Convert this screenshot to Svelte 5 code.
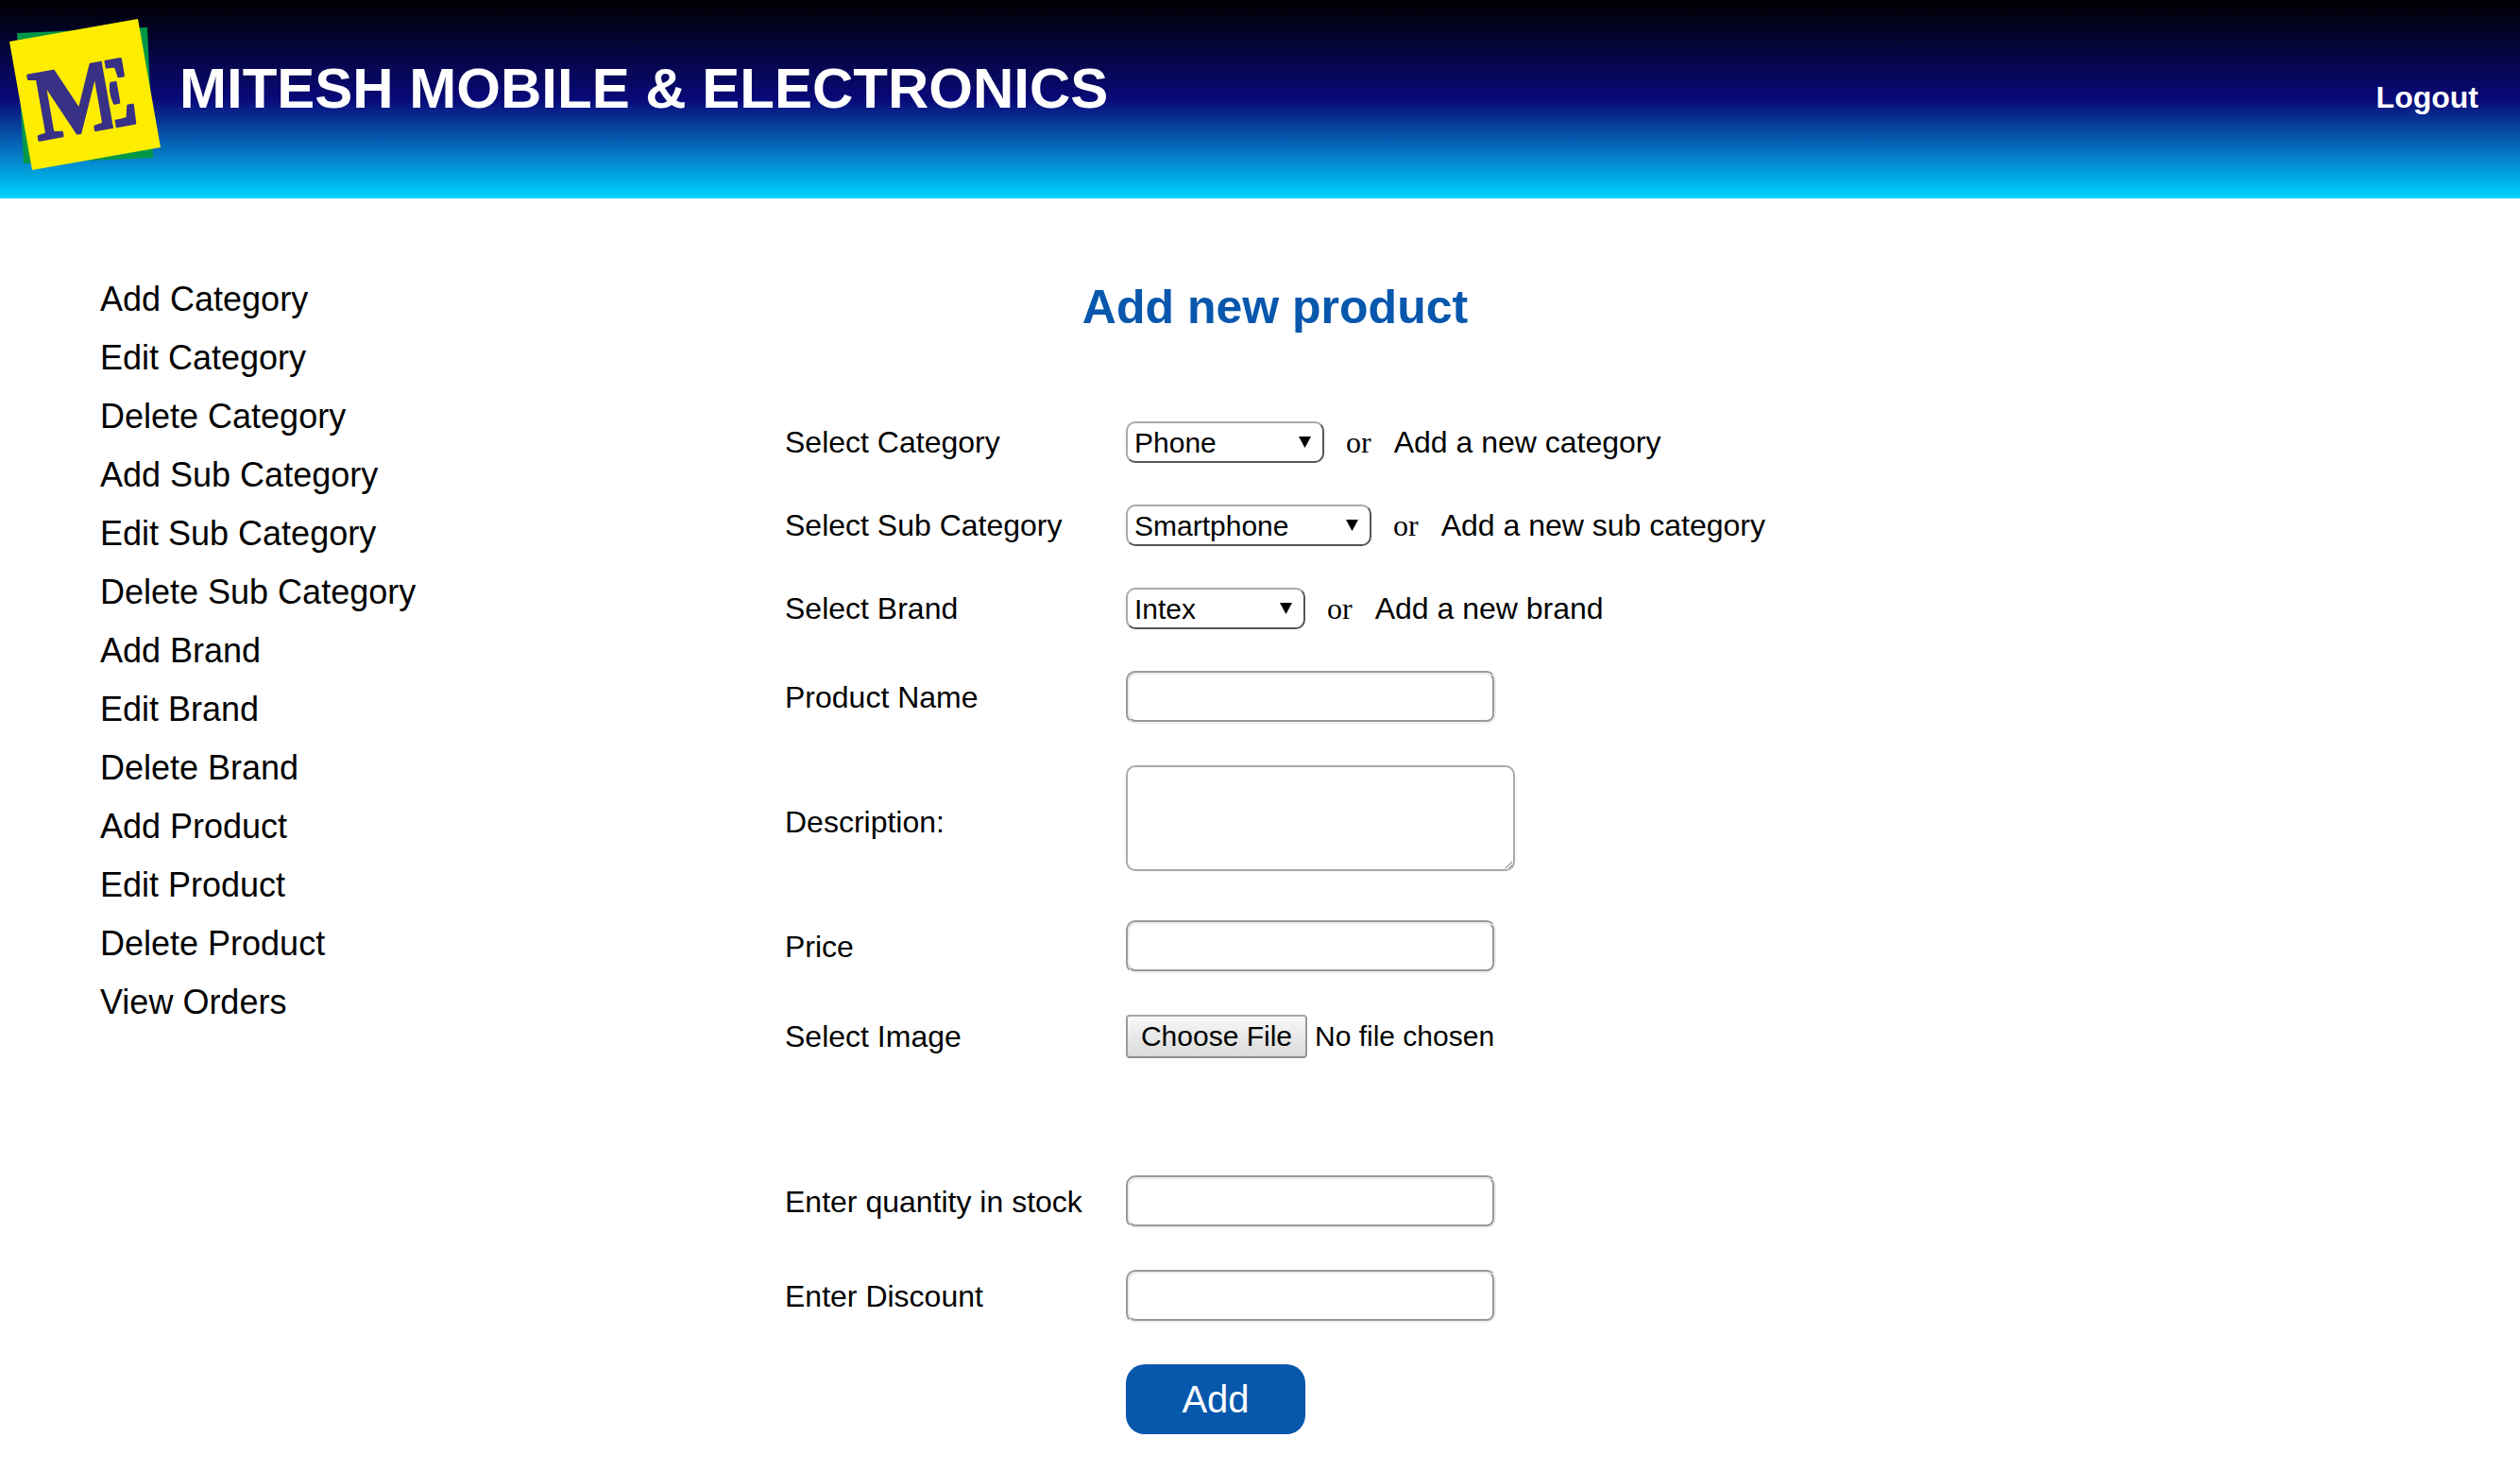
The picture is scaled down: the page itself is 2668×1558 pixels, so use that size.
<script>
  const menu = [
    'Add Category', 'Edit Category', 'Delete Category',
    'Add Sub Category', 'Edit Sub Category', 'Delete Sub Category',
    'Add Brand', 'Edit Brand', 'Delete Brand',
    'Add Product', 'Edit Product', 'Delete Product',
    'View Orders'
  ];

  const pickers = [
    { id: 'category', label: 'Select Category', size: 'medium', options: ['Phone'], link: 'Add a new category' },
    { id: 'subcategory', label: 'Select Sub Category', size: 'wide', options: ['Smartphone'], link: 'Add a new sub category' },
    { id: 'brand', label: 'Select Brand', size: 'narrow', options: ['Intex'], link: 'Add a new brand' }
  ];
</script>

<header class="banner">
  <svg class="logo" viewBox="0 0 180 210" role="img" aria-label="ME">
    <defs>
      <clipPath id="left-part"><rect x="-10" y="-90" width="88" height="110" /></clipPath>
      <clipPath id="right-part"><rect x="81" y="-90" width="40" height="110" /></clipPath>
    </defs>
    <polygon points="18,35 156,29 162,167 25,173" fill="#009846" />
    <polygon points="10,44 146,20 170,156 34,180" fill="#ffed00" />
    <g class="monogram" transform="translate(43 148) rotate(-10)">
      <text x="-3" y="0" clip-path="url(#left-part)">M</text>
      <text x="37" y="0" clip-path="url(#right-part)">E</text>
    </g>
  </svg>
  <h1>MITESH MOBILE &amp; ELECTRONICS</h1>
  <a class="logout" href="#logout">Logout</a>
</header>

<div class="page">
  <nav class="menu" aria-label="Admin">
    <ul>
      {#each menu as item}
        <li><a href="#menu">{item}</a></li>
      {/each}
    </ul>
  </nav>

  <main>
    <h2>Add new product</h2>
    <form>
      {#each pickers as p}
        <label for={p.id}>{p.label}</label>
        <div class="field">
          <span class="picker">
            <select id={p.id} class={p.size}>
              {#each p.options as option}
                <option>{option}</option>
              {/each}
            </select>
          </span>
          <span class="or">or</span>
          <a href="#new">{p.link}</a>
        </div>
      {/each}

      <label for="name">Product Name</label>
      <div class="field"><input id="name" type="text" /></div>

      <label for="description">Description:</label>
      <div class="field area"><textarea id="description"></textarea></div>

      <label for="price">Price</label>
      <div class="field"><input id="price" type="text" /></div>

      <label for="image">Select Image</label>
      <div class="field"><input id="image" type="file" /></div>

      <label class="spaced" for="quantity">Enter quantity in stock</label>
      <div class="field spaced"><input id="quantity" type="text" /></div>

      <label for="discount">Enter Discount</label>
      <div class="field"><input id="discount" type="text" /></div>

      <button type="button">Add</button>
    </form>
  </main>
</div>

<style>
  :global(body) {
    margin: 0;
    background: #fff;
    color: #000;
    font-family: 'Liberation Sans', Arial, sans-serif;
  }

  a {
    color: inherit;
    text-decoration: none;
  }

  .banner {
    display: flex;
    align-items: center;
    height: 210px;
    padding-right: 44px;
    background: linear-gradient(#000, #090979 50%, #00d4ff);
    color: #fff;
  }

  .logo {
    flex: none;
    width: 180px;
    height: 210px;
  }

  .monogram {
    fill: #393185;
    font: bold 106px 'Liberation Serif', 'Times New Roman', serif;
  }

  .monogram text {
    stroke: #393185;
    stroke-width: 3px;
    stroke-linejoin: round;
  }

  h1 {
    margin: 0 0 22px 10px;
    font-size: 60px;
    line-height: 68px;
  }

  .logout {
    margin: 0 0 4px auto;
    font-size: 32px;
    font-weight: bold;
    line-height: 36px;
  }

  .page {
    display: grid;
    grid-template-columns: 1fr auto 1fr;
    padding: 74px 0 40px 32px;
  }

  .menu {
    padding: 2px 0 0 74px;
  }

  ul {
    margin: 0;
    padding: 0;
    list-style: none;
  }

  li {
    font-size: 36px;
    line-height: 62px;
  }

  h2 {
    margin: 12px 0 92px;
    color: #0757ad;
    font-size: 50px;
    line-height: 58px;
    text-align: center;
  }

  form {
    display: grid;
    grid-template-columns: 361px auto;
    row-gap: 44px;
    align-items: center;
    justify-items: start;
    font-size: 32px;
    line-height: 36px;
  }

  .field {
    display: flex;
    align-items: center;
  }

  .area {
    padding-bottom: 8px;
  }

  .spaced {
    margin-top: 80px;
  }

  .picker {
    position: relative;
    display: flex;
  }

  .picker::after {
    content: '';
    position: absolute;
    top: 16px;
    right: 14px;
    width: 13px;
    height: 12px;
    background: #000;
    clip-path: polygon(0 0, 100% 0, 50% 100%);
    pointer-events: none;
  }

  select {
    appearance: none;
    box-sizing: border-box;
    height: 44px;
    padding: 0 7px;
    border: 2px solid;
    border-color: #a9a9a9 #555 #555 #a9a9a9;
    border-radius: 10px;
    background: #fff;
    color: #000;
    font-family: inherit;
    font-size: 30px;
  }

  .narrow {
    width: 190px;
  }

  .medium {
    width: 210px;
  }

  .wide {
    width: 260px;
  }

  .or {
    margin: 0 24px 0 23px;
    font-family: 'Liberation Serif', 'Times New Roman', serif;
  }

  input[type='text'] {
    box-sizing: border-box;
    width: 392px;
    height: 56px;
    padding: 2px 6px;
    border: 4px groove #eee;
    border-radius: 10px;
    background: #fff;
    font-family: inherit;
    font-size: 30px;
  }

  textarea {
    box-sizing: border-box;
    width: 412px;
    height: 112px;
    padding: 4px;
    border: 2px solid #a9a9a9;
    border-radius: 10px;
    background: #fff;
    font-family: inherit;
    font-size: 30px;
  }

  input[type='file'] {
    width: 400px;
    font-family: inherit;
    font-size: 30px;
  }

  input[type='file']::file-selector-button {
    box-sizing: border-box;
    width: 192px;
    height: 46px;
    margin: 0 8px 0 0;
    padding: 0 12px;
    border: 2px solid;
    border-color: #a6a6a6 #999 #8f8f8f;
    border-radius: 4px;
    background: linear-gradient(#f8f8f8, #dadada);
    color: #000;
    font-family: inherit;
    font-size: 30px;
  }

  button {
    grid-column: 2;
    width: 190px;
    height: 74px;
    padding: 0;
    border: 0;
    border-radius: 20px;
    background: #0757ad;
    color: #fff;
    font-family: inherit;
    font-size: 40px;
  }
</style>
